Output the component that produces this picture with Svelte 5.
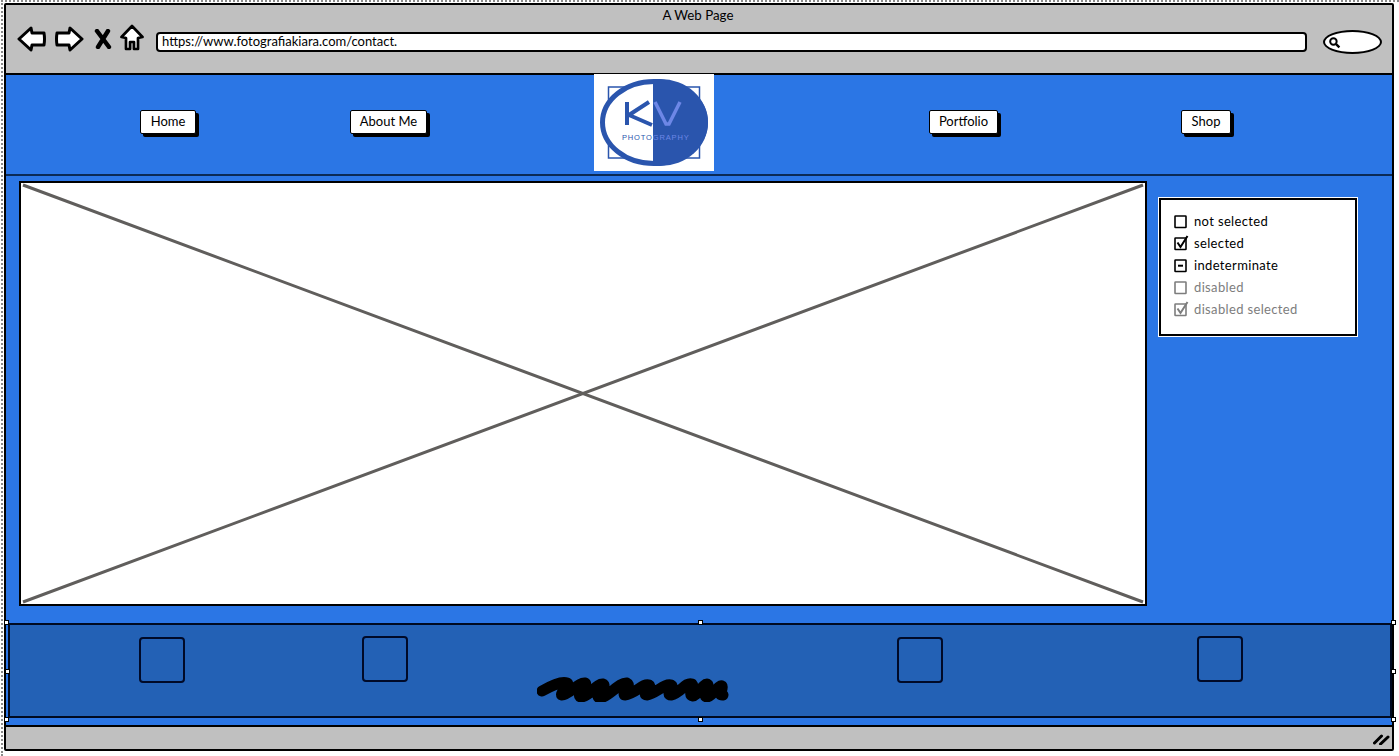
<script>
  const checks = [
    { label: 'not selected', state: 'off' },
    { label: 'selected', state: 'on' },
    { label: 'indeterminate', state: 'mixed' },
    { label: 'disabled', state: 'off', disabled: true },
    { label: 'disabled selected', state: 'on', disabled: true }
  ];
  const handles = [
    [6, 622], [700, 622], [1393, 622], [7, 671], [1393, 671], [6, 719], [700, 719], [1393, 719]
  ];
</script>

<div class="page">
  <div class="window">
    <header class="toolbar">
      <div class="title">A Web Page</div>
      <div class="controls">
        <svg class="icon back" width="30" height="26" viewBox="0 0 30 26" aria-hidden="true">
          <path d="M2 13 L14 2 L15 7 L27 7 Q28 13 27 19 L15 19 L14 24 Z" fill="#fff" stroke="#000" stroke-width="3" stroke-linejoin="round"/>
        </svg>
        <svg class="icon forward" width="30" height="26" viewBox="0 0 30 26" aria-hidden="true">
          <path d="M28 13 L16 2 L15 7 L3 7 Q2 13 3 19 L15 19 L16 24 Z" fill="#fff" stroke="#000" stroke-width="3" stroke-linejoin="round"/>
        </svg>
        <svg class="icon stop" width="18" height="20" viewBox="0 0 18 20" aria-hidden="true">
          <path d="M3 2 L15 18 M14 2 L4 18" fill="none" stroke="#000" stroke-width="4.400" stroke-linecap="round"/>
        </svg>
        <svg class="icon home" width="24" height="28" viewBox="0 0 24 28" aria-hidden="true">
          <path d="M12 2 L22.500 13 L18 14 L18 25 L14 25 L14 18 L10 18 L10 25 L6 25 L6 14 L1.500 13 Z" fill="#fff" stroke="#000" stroke-width="2.700" stroke-linejoin="round"/>
        </svg>
        <div class="url">https://www.fotografiakiara.com/contact.</div>
        <div class="search">
          <svg width="13" height="13" viewBox="0 0 12 12" aria-hidden="true">
            <circle cx="5" cy="5" r="3" fill="none" stroke="#000" stroke-width="1.800"/>
            <path d="M7.500 7.500 L10.500 10.500" stroke="#000" stroke-width="2.200"/>
          </svg>
        </div>
      </div>
    </header>

    <div class="body">
      <nav class="nav">
        <button class="btn home-btn">Home</button>
        <button class="btn about-btn">About Me</button>
        <svg class="logo" width="120" height="97" viewBox="0 0 120 97" role="img" aria-label="KV Photography logo">
          <rect width="120" height="97" fill="#fff"/>
          <rect x="14.500" y="13" width="91" height="71" fill="none" stroke="#2a55ad" stroke-width="1.500"/>
          <ellipse cx="60" cy="48.500" rx="51.500" ry="41" fill="#fff" stroke="#2a55ad" stroke-width="5"/>
          <path d="M59 5 L59 92 L66 92 A48 43.500 0 0 0 66 5 Z" fill="#2a55ad"/>
          <path d="M33 51 L33 28 M55 28 L35 41 L58 51" fill="none" stroke="#2a55ad" stroke-width="4"/>
          <path d="M61 28 L72 50 L75 50 L86 28" fill="none" stroke="#6d87e6" stroke-width="3.500"/>
          <text class="logo-sub" x="28" y="66">PHOTO<tspan class="light">GRAPHY</tspan></text>
        </svg>
        <button class="btn portfolio-btn">Portfolio</button>
        <button class="btn shop-btn">Shop</button>
      </nav>

      <main class="main">
        <div class="placeholder">
          <svg class="cross" viewBox="0 0 1126 423" preserveAspectRatio="none" aria-hidden="true">
            <path d="M2 2 L1124 421 M1124 2 L2 421" stroke="#605e5c" stroke-width="3" fill="none"/>
          </svg>
        </div>
        <aside class="checks">
          {#each checks as c}
            <div class="check" class:disabled={c.disabled}>
              <svg width="15" height="16" viewBox="0 0 15 16" aria-hidden="true">
                <rect x="1" y="3" width="11" height="11.500" rx="0.500" fill="#fff" stroke="currentColor" stroke-width="1.600"/>
                {#if c.state === 'on'}
                  <path d="M3.500 7.500 L6.500 12 L13.500 1" fill="none" stroke="currentColor" stroke-width="2"/>
                {:else if c.state === 'mixed'}
                  <path d="M4 8.700 L9 8.700" stroke="currentColor" stroke-width="2"/>
                {/if}
              </svg>
              <span>{c.label}</span>
            </div>
          {/each}
        </aside>
      </main>

      <footer class="footer">
        <div class="square s1"></div>
        <div class="square s2"></div>
        <div class="square s3"></div>
        <div class="square s4"></div>
        <svg class="scribble" width="194" height="26" viewBox="0 0 194 26" aria-hidden="true">
          <path d="M5 15 C14 10 24 5 30 7 C34 9 22 18 25 19 C32 19 42 6 48 7 C52 9 38 20 44 21 C52 21 60 7 66 8 C71 10 56 21 63 22 C72 21 82 6 90 7 C95 9 84 19 88 19 C98 18 106 7 112 9 C116 11 104 19 110 19 C118 18 128 7 134 9 C138 11 128 19 134 19 C144 17 148 6 155 8 C158 11 150 19 156 20 C160 20 166 8 170 8 C174 10 164 20 170 21 C176 20 182 8 185 10 C187 12 180 20 186 19" fill="none" stroke="#000" stroke-width="11" stroke-linecap="round" stroke-linejoin="round"/>
        </svg>
      </footer>
    </div>

    <div class="status">
      <svg width="17" height="14" viewBox="0 0 17 14" aria-hidden="true">
        <path d="M1.500 12 L8.500 5 M7.500 13 L15 6" stroke="#000" stroke-width="3" stroke-linecap="round"/>
      </svg>
    </div>
  </div>

  {#each handles as [x, y]}
    <span class="handle" style="left:{x - 2}px;top:{y - 2}px"></span>
  {/each}
</div>

<style>
  :global(body) {
    margin: 0;
    background: #fff;
  }
  .page {
    position: relative;
    width: 1399px;
    height: 756px;
    overflow: hidden;
    box-sizing: border-box;
    padding: 3px 0 0 4px;
    background: #fff;
    font-family: "Lato", "Noto Sans", sans-serif;
    color: #000;
  }
  .page::before {
    content: "";
    position: absolute;
    top: 0;
    left: 1px;
    right: 0;
    bottom: 0;
    border-top: 2px dotted #8a8a8a;
    border-left: 2px dotted #8a8a8a;
    pointer-events: none;
  }
  .window {
    position: relative;
    box-sizing: border-box;
    width: 1390px;
    height: 748px;
    display: flex;
    flex-direction: column;
    border: 2px solid #000;
    border-radius: 2px;
    background: #c0c0c0;
  }
  .toolbar {
    height: 70px;
    flex: none;
    box-sizing: border-box;
    border-bottom: 2px solid #000;
  }
  .title {
    text-align: center;
    font-size: 13.300px;
    line-height: 16px;
    padding-top: 2px;
    margin-left: -2px;
  }
  .controls {
    display: flex;
    align-items: center;
    height: 30px;
    margin-top: 1px;
    padding-left: 11px;
  }
  .icon { flex: none; display: block; }
  .forward { margin-left: 7px; }
  .stop { margin-left: 10px; }
  .home { margin-left: 8px; margin-top: -2px; }
  .url {
    box-sizing: border-box;
    width: 1151px;
    height: 20px;
    margin-left: 12px;
    margin-top: 6px;
    padding-left: 4px;
    border: 2.500px solid #000;
    border-radius: 4px;
    background: #fff;
    font-size: 13px;
    line-height: 14px;
    white-space: nowrap;
  }
  .search {
    box-sizing: border-box;
    width: 59px;
    height: 24px;
    margin-left: 16px;
    margin-top: 5px;
    padding: 4px 0 0 3px;
    border: 2.500px solid #000;
    border-radius: 50% / 50%;
    background: #fff;
    line-height: 0;
  }
  .body {
    flex: none;
    height: 650px;
    display: flex;
    flex-direction: column;
    background: #2b76e5;
  }
  .nav {
    position: relative;
    flex: none;
    height: 101px;
    display: flex;
    align-items: center;
    box-sizing: border-box;
    border-bottom: 2px solid #0b2a55;
    padding-left: 134px;
  }
  .btn {
    height: 24px;
    box-sizing: border-box;
    padding: 0 0 2px;
    border: 1.500px solid #000;
    border-radius: 2px;
    background: #fff;
    box-shadow: 3px 3px 0 #000;
    font: inherit;
    font-size: 13px;
    color: #000;
    margin-top: -6px;
  }
  .home-btn { width: 56px; }
  .about-btn { width: 77px; margin-left: 154px; }
  .logo { flex: none; margin-left: 167px; margin-top: -5px; }
  .portfolio-btn { width: 69px; margin-left: 215px; }
  .shop-btn { width: 50px; margin-left: 183px; }
  .logo-sub { font: 400 7.500px "Liberation Sans", sans-serif; fill: #2a55ad; letter-spacing: 0.850px; }
  .logo-sub .light { fill: #6d87e6; }
  .main {
    flex: none;
    height: 447px;
    display: flex;
    align-items: flex-start;
    padding: 5px 0 0 13px;
    box-sizing: border-box;
  }
  .placeholder {
    position: relative;
    box-sizing: border-box;
    flex: none;
    width: 1128px;
    height: 425px;
    border: 2px solid #000;
    background: #fff;
  }
  .cross {
    position: absolute;
    inset: 0;
    width: 100%;
    height: 100%;
    display: block;
  }
  .checks {
    box-sizing: border-box;
    width: 198px;
    height: 138px;
    margin: 17px 0 0 12px;
    padding: 12px 0 0 13px;
    display: flex;
    flex-direction: column;
    gap: 4px;
    background: #fff;
    border: 2px solid #000;
    outline: 1px solid #fff;
    font-size: 13px;
    letter-spacing: 0.350px;
  }
  .check {
    display: flex;
    align-items: center;
    gap: 5px;
    height: 18px;
    color: #000;
  }
  .check.disabled { color: #7d7d7d; }
  .footer {
    position: relative;
    box-sizing: border-box;
    flex: none;
    height: 95px;
    margin: 0 0 0 2px;
    width: 1384px;
    background: #2361b5;
    border: 2.500px solid #000a20;
    display: flex;
    align-items: flex-start;
    padding-top: 12px;
  }
  .square {
    flex: none;
    box-sizing: border-box;
    width: 46px;
    height: 46px;
    border: 2px solid #000a28;
    border-radius: 4px;
  }
  .s1 { margin-left: 129px; }
  .s2 { margin-left: 177px; margin-top: -1px; }
  .s3 { margin-left: 489px; }
  .s4 { margin-left: 254px; margin-top: -1px; }
  .scribble {
    position: absolute;
    left: 527px;
    top: 51px;
  }
  .status {
    flex: 1;
    display: flex;
    justify-content: flex-end;
    align-items: center;
    padding-right: 2px;
    border-top: 2px solid #000;
  }
  .handle {
    position: absolute;
    box-sizing: border-box;
    width: 5px;
    height: 5px;
    background: #fff;
    border: 1px solid #000;
  }
</style>
